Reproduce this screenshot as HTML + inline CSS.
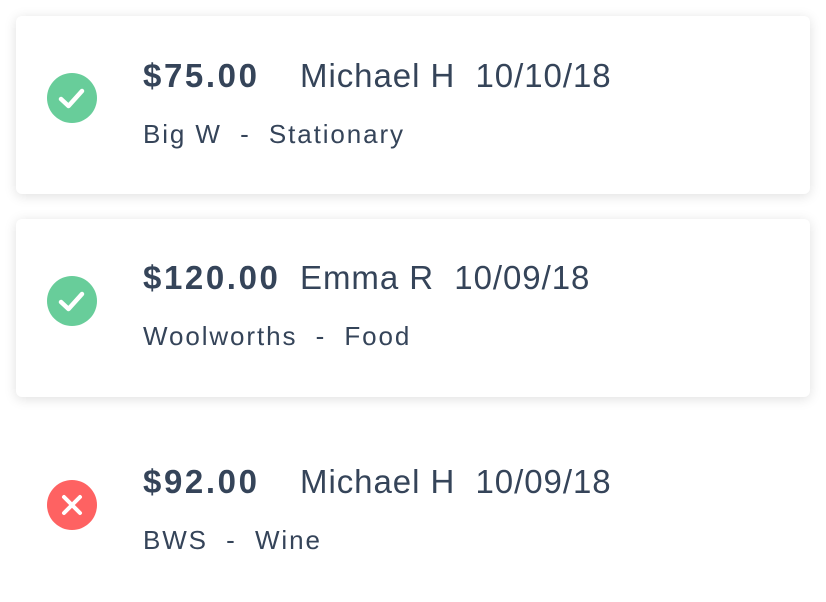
<!DOCTYPE html>
<html><head><meta charset="utf-8"><style>
html,body{margin:0;padding:0;background:#fff;width:826px;height:602px;overflow:hidden;font-family:"Liberation Sans",sans-serif;color:#354459}
.card{position:absolute;left:16px;width:794px;height:178px;background:#fff;border-radius:6px;box-shadow:0 2px 12px rgba(0,0,0,0.13)}
.t{position:absolute;white-space:nowrap;line-height:1}
.amt{font-weight:bold;font-size:33px;letter-spacing:2.6px;left:143px}
.nm{font-size:33px;letter-spacing:0.95px}
.sub{font-size:26px;letter-spacing:1.9px;left:143px}
.ic{position:absolute;left:47px;width:50px;height:50px}
</style></head><body>
<div class="card" style="top:16px"></div>
<div class="card" style="top:219px"></div>

<svg class="ic" style="top:73px" viewBox="0 0 50 50"><circle cx="25" cy="25" r="25" fill="#68cd9a"/><path d="M14 26 L21.5 33 L35 18" stroke="#fff" stroke-width="4.5" fill="none" stroke-linecap="round" stroke-linejoin="round"/></svg>
<div class="t amt" style="top:59px">$75.00</div>
<div class="t nm" style="top:59px;left:300px">Michael H&nbsp; 10/10/18</div>
<div class="t sub" style="top:121px">Big W &nbsp;-&nbsp; Stationary</div>

<svg class="ic" style="top:276px" viewBox="0 0 50 50"><circle cx="25" cy="25" r="25" fill="#68cd9a"/><path d="M14 26 L21.5 33 L35 18" stroke="#fff" stroke-width="4.5" fill="none" stroke-linecap="round" stroke-linejoin="round"/></svg>
<div class="t amt" style="top:261px">$120.00</div>
<div class="t nm" style="top:261px;left:300px">Emma R&nbsp; 10/09/18</div>
<div class="t sub" style="top:323px">Woolworths &nbsp;-&nbsp; Food</div>

<svg class="ic" style="top:480px" viewBox="0 0 50 50"><circle cx="25" cy="25" r="25" fill="#fe6262"/><path d="M17 17 L33 33 M33 17 L17 33" stroke="#fff" stroke-width="4" fill="none" stroke-linecap="round"/></svg>
<div class="t amt" style="top:465px">$92.00</div>
<div class="t nm" style="top:465px;left:300px">Michael H&nbsp; 10/09/18</div>
<div class="t sub" style="top:527px">BWS &nbsp;-&nbsp; Wine</div>
</body></html>
